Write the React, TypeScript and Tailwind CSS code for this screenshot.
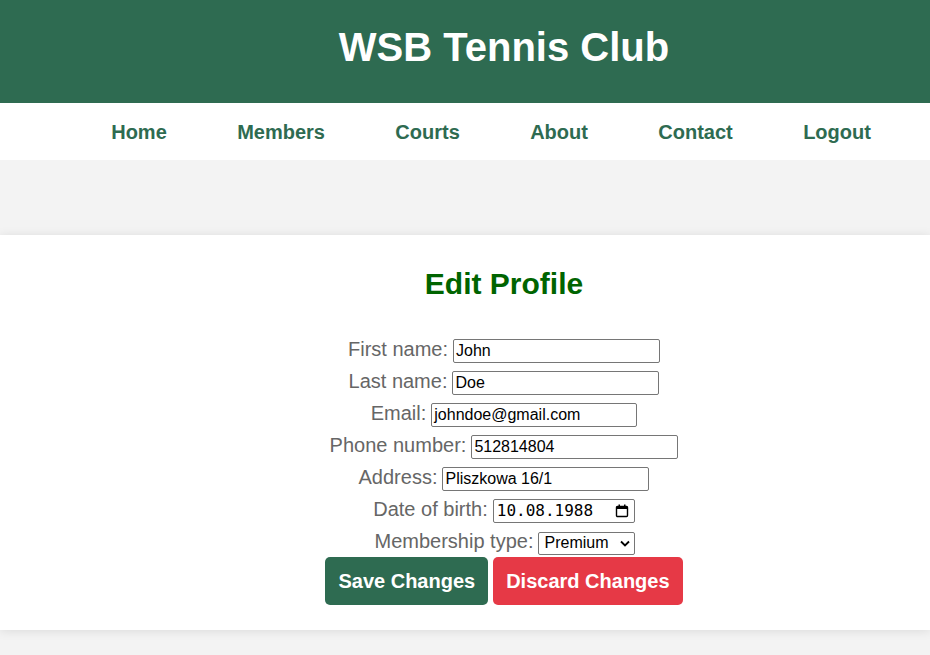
import React from "react";

const rows: { label: string; value: string; w: number }[] = [
  { label: "First name:", value: "John", w: 207 },
  { label: "Last name:", value: "Doe", w: 207 },
  { label: "Email:", value: "johndoe@gmail.com", w: 206 },
  { label: "Phone number:", value: "512814804", w: 207 },
  { label: "Address:", value: "Pliszkowa 16/1", w: 207 },
];

const nav = ["Home", "Members", "Courts", "About", "Contact", "Logout"];

export default function App() {
  return (
    <div className="min-h-[655px] bg-[#f3f3f3] font-['Liberation_Sans',Arial,sans-serif] overflow-hidden">
      <header className="h-[103px] bg-[#2e6b51] pt-[24px] pl-[78px]">
        <h1 className="text-center text-[40px] font-bold text-white leading-[46px]">WSB Tennis Club</h1>
      </header>
      <nav className="h-[57px] bg-white flex items-center pl-[76px] pt-[2px]">
        {nav.map((n) => (
          <span key={n} className="px-[35.2px] text-[20px] font-bold text-[#2e6b51] leading-[23px]">
            {n}
          </span>
        ))}
      </nav>
      <div className="h-[75px]" />
      <main className="bg-white shadow-[0_1px_10px_rgba(0,0,0,0.1)] pl-[78px] pt-[32px] pb-[25px]">
        <h2 className="text-center text-[30px] font-bold text-[#006400] leading-[34px]">Edit Profile</h2>
        <div className="mt-[34px] flex flex-col items-center">
          {rows.map((r) => (
            <div key={r.label} className="h-[32px] flex items-center gap-[5px]">
              <span className="text-[20px] text-[#666666] leading-[23px] -mt-[3px]">{r.label}</span>
              <div
                className="h-[24px] border border-[#767676] rounded-[2px] px-[2px] flex items-center text-[16px] text-black leading-none"
                style={{ width: r.w }}
              >
                {r.value}
              </div>
            </div>
          ))}
          <div className="h-[32px] flex items-center gap-[5px]">
            <span className="text-[20px] text-[#666666] leading-[23px] -mt-[3px]">Date of birth:</span>
            <div className="w-[142px] h-[24px] border border-[#767676] rounded-[2px] pl-[3px] pr-[5px] flex items-center justify-between text-[16px] text-black font-['DejaVu_Sans_Mono',monospace] leading-none">
              <span>10.08.1988</span>
              <svg width="14" height="14" viewBox="0 0 14 14" fill="none">
                <rect x="1.5" y="2.5" width="11" height="10" rx="1" stroke="#000" strokeWidth="1.4" />
                <rect x="1.5" y="2.5" width="11" height="2.5" fill="#000" />
                <rect x="3.5" y="0.5" width="1.5" height="3" fill="#000" />
                <rect x="9" y="0.5" width="1.5" height="3" fill="#000" />
              </svg>
            </div>
          </div>
          <div className="h-[32px] flex items-center gap-[5px] pl-[2px]">
            <span className="text-[20px] text-[#666666] leading-[23px] -mt-[3px]">Membership type:</span>
            <div className="w-[97px] h-[23px] border border-[#767676] rounded-[2px] pl-[5px] pr-[4px] flex items-center justify-between text-[16px] text-black leading-none">
              <span>Premium</span>
              <svg width="10" height="7" viewBox="0 0 10 7" fill="none">
                <path d="M1 1.5 L5 5.5 L9 1.5" stroke="#000" strokeWidth="1.8" />
              </svg>
            </div>
          </div>
          <div className="-mt-[2px] flex gap-[5px]">
            <button className="h-[48px] px-[13px] rounded-[5px] bg-[#2e6b51] text-white text-[20px] font-bold leading-[23px]">
              Save Changes
            </button>
            <button className="h-[48px] px-[13px] rounded-[5px] bg-[#e63946] text-white text-[20px] font-bold leading-[23px]">
              Discard Changes
            </button>
          </div>
        </div>
      </main>
    </div>
  );
}
